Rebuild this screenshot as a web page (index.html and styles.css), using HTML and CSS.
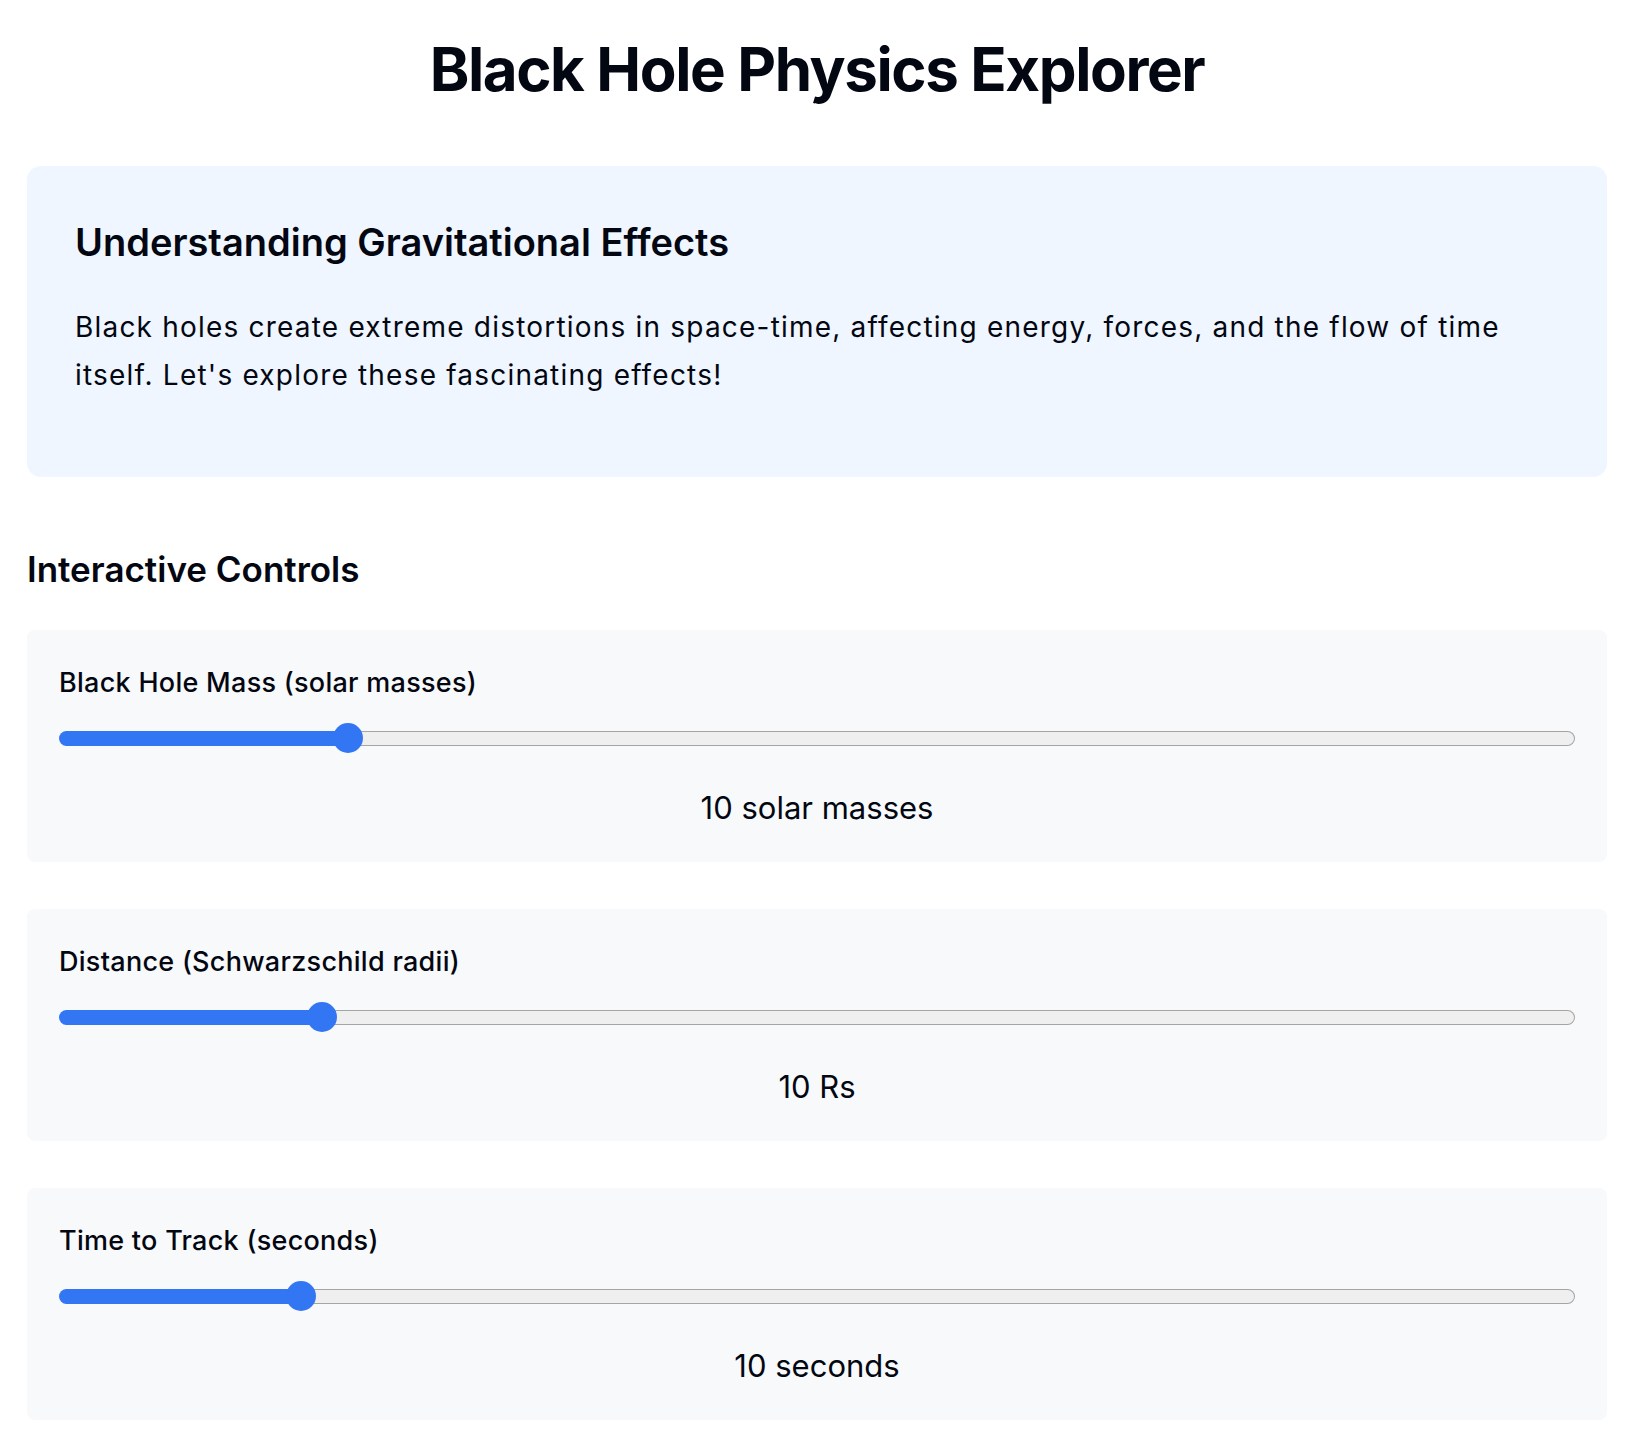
FILE: index.html
```html
<!DOCTYPE html>
<html lang="en">
<head>
<meta charset="utf-8">
<title>Black Hole Physics Explorer</title>
<link rel="stylesheet" href="styles.css">
</head>
<body>
<div class="page">
  <h1 class="title">Black Hole Physics Explorer</h1>

  <section class="intro">
    <h2 class="intro-title">Understanding Gravitational Effects</h2>
    <p class="intro-text">Black holes create extreme distortions in space-time, affecting energy, forces, and the flow of time itself. Let's explore these fascinating effects!</p>
  </section>

  <h3 class="section-title">Interactive Controls</h3>

  <div class="controls">
    <div class="control">
      <label class="control-label" for="mass">Black Hole Mass (solar masses)</label>
      <input class="slider" id="mass" type="range" min="1" max="50" value="10" style="--p:0.1837">
      <div class="control-value">10 solar masses</div>
    </div>
    <div class="control">
      <label class="control-label" for="distance">Distance (Schwarzschild radii)</label>
      <input class="slider" id="distance" type="range" min="1" max="55" value="10" style="--p:0.1667">
      <div class="control-value">10 Rs</div>
    </div>
    <div class="control">
      <label class="control-label" for="time">Time to Track (seconds)</label>
      <input class="slider" id="time" type="range" min="1" max="60" value="10" style="--p:0.1525">
      <div class="control-value">10 seconds</div>
    </div>
  </div>
</div>
</body>
</html>
```

FILE: styles.css
```css
* {
  box-sizing: border-box;
}

body {
  margin: 0;
  background: #ffffff;
  color: #030712;
  font-family: Inter, "Noto Sans", "Liberation Sans", sans-serif;
}

.page {
  width: 1580px;
  margin-left: 27px;
  padding-top: 31px;
  padding-bottom: 20px;
}

.title {
  margin: 0;
  font-size: 60px;
  line-height: 77px;
  font-weight: 700;
  text-align: center;
  letter-spacing: -1.4px;
}

.intro {
  margin-top: 58px;
  background: #eff6ff;
  border-radius: 14px;
  padding: 53px 48px 78px 48px;
}

.intro-title {
  margin: 0 0 38px 0;
  font-size: 38px;
  line-height: 46px;
  font-weight: 600;
}

.intro-text {
  margin: 0;
  font-size: 28px;
  line-height: 48px;
  font-weight: 400;
  letter-spacing: 1.2px;
}

.section-title {
  margin: 71px 0 39px 0;
  font-size: 35px;
  line-height: 43px;
  font-weight: 600;
}

.controls {
  display: flex;
  flex-direction: column;
  gap: 47px;
}

.control {
  background: #f8f9fb;
  border-radius: 8px;
  padding: 32px 32px 31px 32px;
}

.control-label {
  display: block;
  margin-bottom: 20px;
  font-size: 27px;
  line-height: 41px;
  font-weight: 500;
  letter-spacing: 0.28px;
}

.slider {
  -webkit-appearance: none;
  appearance: none;
  display: block;
  width: 100%;
  height: 30px;
  margin: 0;
  padding: 0;
  background: transparent;
}

.slider::-webkit-slider-runnable-track {
  height: 15px;
  border: 1.5px solid transparent;
  border-radius: 8px;
  background:
    linear-gradient(to right, #3376f4 0, #3376f4 calc(15px + var(--p) * (100% - 30px)), transparent calc(15px + var(--p) * (100% - 30px))),
    linear-gradient(#efefef, #efefef),
    linear-gradient(#a5a5a5, #a5a5a5);
  background-clip: border-box, padding-box, border-box;
  background-origin: border-box, border-box, border-box;
}

.slider::-webkit-slider-thumb {
  -webkit-appearance: none;
  appearance: none;
  width: 30px;
  height: 30px;
  margin-top: -9px;
  border: none;
  border-radius: 50%;
  background: #3376f4;
}

.control-value {
  margin-top: 31px;
  font-size: 31px;
  line-height: 47px;
  text-align: center;
  font-weight: 400;
}
```
